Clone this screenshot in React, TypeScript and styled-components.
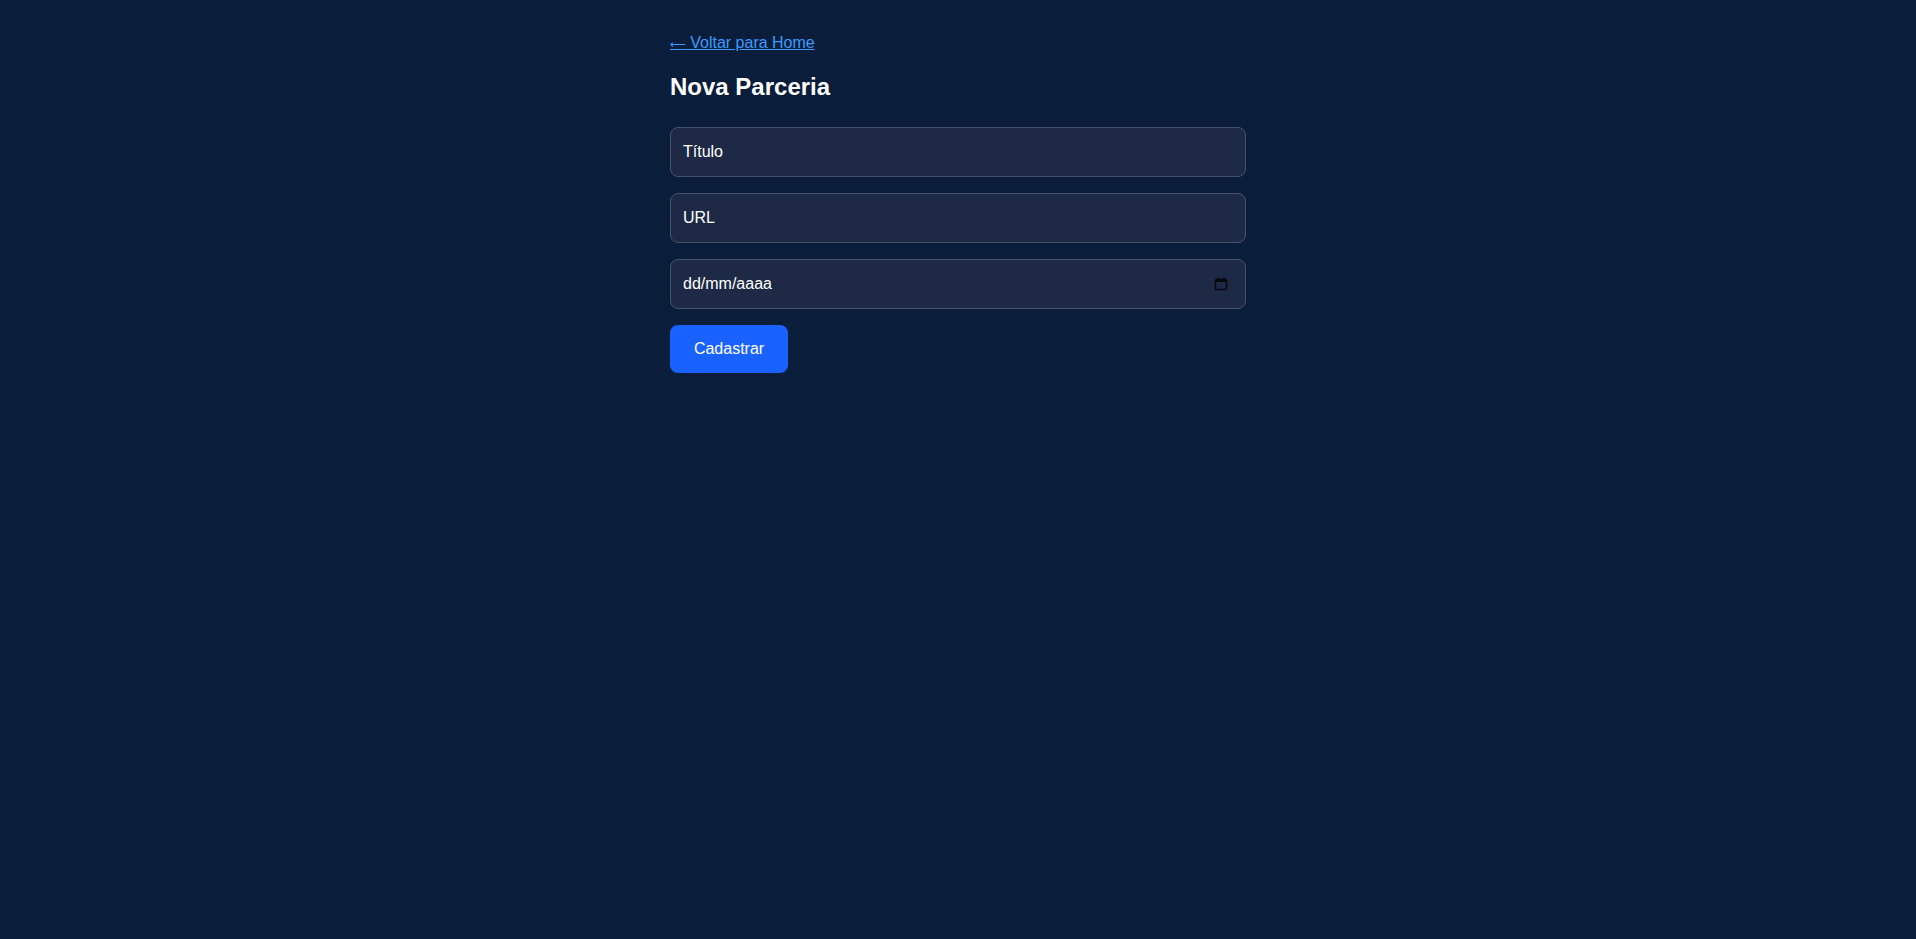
import React from "react";
import styled, { createGlobalStyle } from "styled-components";

const Global = createGlobalStyle`
  html, body { margin: 0; padding: 0; background: #0a1d3b; }
  body { font-family: "Liberation Sans", Arial, sans-serif; color: #ffffff; min-height: 939px; }
  #root { min-height: 939px; background: #0a1d3b; }
`;

const Page = styled.div`
  width: 576px;
  margin: 0 auto;
  padding-top: 34px;
  display: flex;
  flex-direction: column;
`;

const BackLink = styled.a`
  color: #3d9bff;
  font-size: 16px;
  line-height: 18px;
  height: 18px;
  text-decoration: underline;
  align-self: flex-start;
  cursor: pointer;
`;

const Arrow = styled.span`
  font-family: "DejaVu Sans", sans-serif;
  font-size: 11px;
  line-height: 0;
`;

const Title = styled.h2`
  margin: 21px 0 26px;
  font-size: 24px;
  line-height: 28px;
  font-weight: 700;
  color: #ffffff;
`;

const Form = styled.form`
  display: flex;
  flex-direction: column;
  gap: 16px;
`;

const FieldBox = styled.div`
  height: 50px;
  box-sizing: border-box;
  display: flex;
  align-items: center;
  padding: 0 17px 0 12px;
  background: #1e2a45;
  border: 1px solid #46526a;
  border-radius: 8px;
`;

const Field = styled.input`
  flex: 1;
  min-width: 0;
  background: transparent;
  border: none;
  outline: none;
  padding: 0;
  font-family: "Liberation Sans", Arial, sans-serif;
  font-size: 16px;
  color: #ffffff;
  &::placeholder { color: #ffffff; opacity: 1; }
`;

const Submit = styled.button`
  align-self: flex-start;
  width: 118px;
  height: 48px;
  border: none;
  border-radius: 8px;
  background: #1a62ff;
  color: #ffffff;
  font-family: "Liberation Sans", Arial, sans-serif;
  font-size: 16px;
  cursor: pointer;
`;

const CalendarIcon = () => (
  <svg width="14" height="14" viewBox="0 0 14 14" fill="none">
    <rect x="1.5" y="2.5" width="11" height="10" rx="1" stroke="#05070d" strokeWidth="1.6" />
    <rect x="1.5" y="2.5" width="11" height="2.5" fill="#05070d" />
    <line x1="4" y1="0.5" x2="4" y2="3" stroke="#05070d" strokeWidth="1.6" />
    <line x1="10" y1="0.5" x2="10" y2="3" stroke="#05070d" strokeWidth="1.6" />
  </svg>
);

export default function App() {
  return (
    <>
      <Global />
      <Page>
        <BackLink href="#">
          <Arrow>⟵</Arrow> Voltar para Home
        </BackLink>
        <Title>Nova Parceria</Title>
        <Form onSubmit={(e) => e.preventDefault()}>
          <FieldBox>
            <Field placeholder="Título" />
          </FieldBox>
          <FieldBox>
            <Field placeholder="URL" />
          </FieldBox>
          <FieldBox>
            <Field placeholder="dd/mm/aaaa" />
            <CalendarIcon />
          </FieldBox>
          <Submit type="submit">Cadastrar</Submit>
        </Form>
      </Page>
    </>
  );
}
